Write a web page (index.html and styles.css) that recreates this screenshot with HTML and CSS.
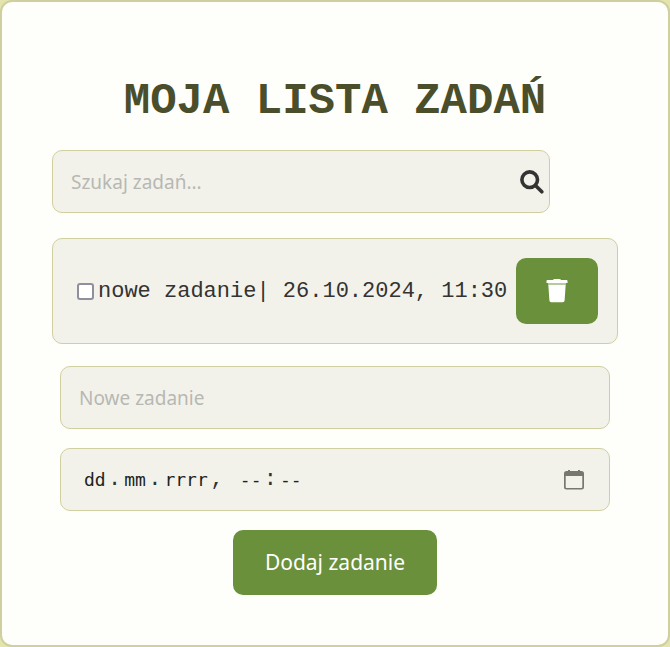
FILE: index.html
```html
<!DOCTYPE html>
<html lang="pl">
<head>
<meta charset="utf-8">
<meta name="viewport" content="width=device-width, initial-scale=1">
<title>Moja lista zadań</title>
<link rel="stylesheet" href="styles.css">
</head>
<body>
<main class="card">
  <h1 class="title">MOJA LISTA ZADAŃ</h1>
  <form class="search" role="search">
    <input class="search-input" type="search" placeholder="Szukaj zadań..." aria-label="Szukaj zadań">
    <button class="search-button" type="button" aria-label="Szukaj">
      <svg class="search-icon" viewBox="0 0 24 24" aria-hidden="true"><circle cx="9.7" cy="9.7" r="7.8" fill="none" stroke="currentColor" stroke-width="3.6"/><path d="M15.5 15.5L21.8 21.8" fill="none" stroke="currentColor" stroke-width="3.6" stroke-linecap="round"/></svg>
    </button>
  </form>
  <ul class="tasks">
    <li class="task">
      <input class="check" type="checkbox" id="task-1">
      <label class="task-name" for="task-1">nowe zadanie| 26.10.2024, 11:30</label>
      <button class="delete" type="button" aria-label="Usuń">
        <svg class="trash-icon" viewBox="0 0 22 24" aria-hidden="true"><path fill="#fff" d="M7 1Q7.400 0 8.500 0h5Q14.600 0 15 1h5.500Q21.500 1 21.500 2v2H.5V2Q.5 1 1.500 1zM2.300 5.500h17.400L18.600 21.500Q18.500 23.300 16.700 23.300H5.300Q3.500 23.300 3.400 21.500z"/><path fill="#b6cca0" d="M2 4h18v1.600H2z"/></svg>
      </button>
    </li>
  </ul>
  <form class="new-task">
    <input class="field" type="text" placeholder="Nowe zadanie" aria-label="Nowe zadanie">
    <div class="field date" role="group" aria-label="Termin">
      <input class="part" type="text" value="dd" aria-label="Dzień"><span>.</span><input class="part" type="text" value="mm" aria-label="Miesiąc"><span>.</span><input class="part part-year" type="text" value="rrrr" aria-label="Rok"><span class="separator">, </span><input class="part" type="text" value="--" aria-label="Godzina"><span>:</span><input class="part" type="text" value="--" aria-label="Minuta">
      <button class="calendar" type="button" aria-label="Wybierz datę">
        <svg class="calendar-icon" viewBox="0 0 20 20" aria-hidden="true"><path fill="currentColor" fill-rule="evenodd" d="M4 0h2v1h8V0h2v1h1.500Q20 1 20 3.500V17Q20 19.500 17.500 19.500h-15Q0 19.500 0 17V3.500Q0 1 2.500 1H4zM1.700 6V17q0 .9.9.9h14.800q.9 0 .9-.9V6z"/></svg>
      </button>
    </div>
    <button class="add" type="submit">Dodaj zadanie</button>
  </form>
</main>
</body>
</html>
```
FILE: styles.css
```css
* {
  box-sizing: border-box;
}

body {
  margin: 0;
  background: #e3e4ae;
  color: #333;
  font-family: "Liberation Mono", monospace;
  font-size: 22px;
}

button,
input {
  margin: 0;
  font-family: "Noto Sans", sans-serif;
}

button {
  padding: 0;
  border: 0;
  cursor: pointer;
}

.card {
  min-height: 100vh;
  padding: 73px 50px 50px;
  border: 2px solid #cfcf9f;
  border-radius: 12px;
  background: #fefffa;
}

.title {
  margin: 0 0 23px;
  color: #4b4e2a;
  font-size: 44px;
  line-height: 52px;
  text-align: center;
}

.search-input,
.task,
.field {
  border: 1px solid #cfcf9f;
  border-radius: 10px;
  background: #f2f2eb;
}

.search {
  display: grid;
  width: 88%;
  align-items: center;
}

.search-input,
.search-button {
  grid-area: 1 / 1;
}

.search-input,
.field {
  width: 100%;
  height: 63px;
  padding: 0 18px;
  font-size: 19px;
  appearance: none;
}

.search-input::placeholder,
.field::placeholder {
  color: #b7b8b3;
  opacity: 1;
}

.search-button {
  justify-self: end;
  margin-right: 6px;
  background: none;
  color: #333;
}

.search-icon {
  display: block;
  width: 24px;
  height: 24px;
}

.tasks {
  margin: 25px 0 22px;
  padding: 0;
  list-style: none;
}

.task {
  display: flex;
  align-items: center;
  padding: 19px 19px 19px 24px;
}

.check {
  flex: none;
  width: 17px;
  height: 17px;
  margin-right: 4px;
  border: 2px solid #8f8f9d;
  border-radius: 3px;
  background: #fff;
  appearance: none;
}

.check:checked {
  background: #6a903b;
}

.task-name {
  flex: 1;
}

.delete {
  display: grid;
  flex: none;
  width: 82px;
  height: 66px;
  place-items: center;
  border-radius: 10px;
  background: #6a903b;
}

.trash-icon {
  width: 22px;
  height: 24px;
}

.new-task {
  display: flex;
  flex-direction: column;
  align-items: center;
  gap: 19px;
  padding: 0 8px;
}

.date {
  display: flex;
  align-items: center;
  padding: 0 25px 0 20px;
  font-size: 22px;
}

.part {
  width: 27px;
  padding: 0 2px 0 3px;
  border: 0;
  background: none;
  color: #222;
  font-family: "DejaVu Sans Mono", "Liberation Mono", monospace;
  font-size: 18px;
}

.part-year {
  width: 49px;
}

.separator {
  white-space: pre;
}

.calendar {
  margin-left: auto;
  background: none;
  color: #777772;
}

.calendar-icon {
  display: block;
  width: 20px;
  height: 20px;
}

.add {
  padding: 0 32px;
  border-radius: 10px;
  background: #6a903b;
  color: #fff;
  font-size: 21px;
  line-height: 65px;
}
```
